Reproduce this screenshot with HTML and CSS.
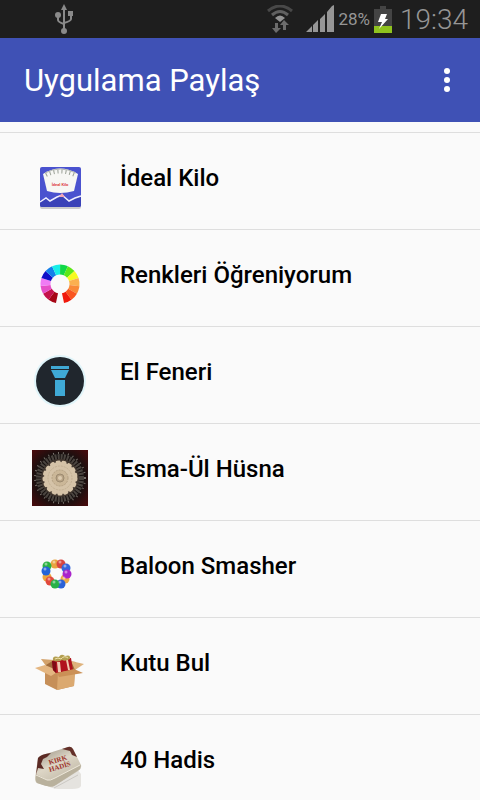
FILE: index.html
```html
<!DOCTYPE html>
<html lang="tr">
<head>
    <meta charset="UTF-8">
    <meta name="viewport" content="width=device-width, initial-scale=1.0">
    <title>Uygulama Paylaş</title>
    <link rel="stylesheet" href="styles.css">
</head>
<body>
    <div class="status-bar">
        <svg class="usb-icon" width="20" height="30" viewBox="0 0 20 30" fill="none" stroke="#8a8a8a" stroke-width="2">
            <path d="M10 4V26M4 11V16Q4 18 10 20M17 10V15Q17 17 10 19"/>
            <path d="M10 0L13 6H7Z" fill="#8a8a8a" stroke="none"/>
            <circle cx="4" cy="11" r="3" fill="#8a8a8a" stroke="none"/>
            <path d="M14 7H19V12H14Z" fill="#8a8a8a" stroke="none"/>
            <circle cx="10" cy="27" r="3" fill="#8a8a8a" stroke="none"/>
        </svg>
        <div class="status-right">
            <svg width="26" height="28" viewBox="0 0 26 28" fill="none">
                <path d="M1 6Q13 -4 25 6" stroke="#484848" stroke-width="3"/>
                <path d="M5 10Q13 3 21 10" stroke="#606060" stroke-width="3"/>
                <path d="M8 13Q13 8 18 13L13 17Z" fill="#929292"/>
                <path d="M8 18H11V23H14L9 28L5 23H8Z" fill="#6c6c6c"/>
                <path d="M16 25V20H13L17 15L22 20H19V25Z" fill="#6c6c6c"/>
            </svg>
            <svg class="signal-icon" width="28" height="28" viewBox="0 0 28 28" fill="#969696">
                <path d="M0 27L6 21V27ZM7 20L12 15V27H7ZM14 14L19 9V27H14ZM21 7L26 1L28 0V27H21Z"/>
            </svg>
            <span class="battery-level">28%</span>
            <svg class="battery-icon" width="18" height="28" viewBox="0 0 18 28">
                <path d="M6 1H12V4H18V28H0V4H6Z" fill="#444"/>
                <path d="M0 21H18V28H0Z" fill="#8fc31f"/>
                <path d="M7 9H13L11 14H14L5 24L8 17H4Z" fill="#fff"/>
            </svg>
            <span class="clock">19:34</span>
        </div>
    </div>

    <header class="app-bar">
        <h1>Uygulama Paylaş</h1>
        <button class="menu-button" type="button" aria-label="Menü">
            <svg width="6" height="24" viewBox="0 0 6 24" fill="#fff">
                <circle cx="3" cy="3" r="3"/>
                <circle cx="3" cy="12" r="3"/>
                <circle cx="3" cy="21" r="3"/>
            </svg>
        </button>
    </header>

    <ul class="app-list">
        <li class="app-item">
            <!-- bathroom scale -->
            <svg class="app-icon" viewBox="0 0 56 56">
                <rect x="8" y="9" width="41" height="41" rx="2" fill="#ccc"/>
                <rect x="8" y="8" width="41" height="40" rx="2" fill="#4a52cf"/>
                <path d="M11 15Q28 4 46 15L42 32Q28 36 15 32Z" fill="#f7f7f4"/>
                <path d="M14 16Q28 9 43 16" fill="none" stroke="#999f94" stroke-width="4" stroke-dasharray="1 3"/>
                <path d="M13 14Q28 6 44 14" fill="none" stroke="#b4b8b2" stroke-width="1"/>
                <text class="scale-label" x="28" y="27">İdeal Kilo</text>
                <path d="M8 43L14 39L18 42L25 38L30 36L37 42L43 39L49 37V46Q49 48 47 48H10Q8 48 8 46Z" fill="#3a42b8"/>
                <path d="M8 43L14 39L18 42L25 38L30 36L37 42L43 39L49 37" fill="none" stroke="#eef" stroke-width="1.5"/>
                <path d="M27 38L30 34L33 38Z" fill="#f3a5b5"/>
            </svg>
            <span class="app-name">İdeal Kilo</span>
        </li>
        <li class="app-item">
            <!-- colour wheel -->
            <svg class="app-icon" viewBox="0 0 56 56">
                <g class="wheel" transform="rotate(102 28 28)">
                    <circle cx="28" cy="28" r="14.5" pathLength="360" stroke="#a60616"/>
                    <circle cx="28" cy="28" r="14.5" pathLength="360" stroke="#c4124a" stroke-dashoffset="-24"/>
                    <circle cx="28" cy="28" r="14.5" pathLength="360" stroke="#e650c8" stroke-dashoffset="-48"/>
                    <circle cx="28" cy="28" r="14.5" pathLength="360" stroke="#f07cf5" stroke-dashoffset="-72"/>
                    <circle cx="28" cy="28" r="14.5" pathLength="360" stroke="#1010c8" stroke-dashoffset="-96"/>
                    <circle cx="28" cy="28" r="14.5" pathLength="360" stroke="#1480ea" stroke-dashoffset="-120"/>
                    <circle cx="28" cy="28" r="14.5" pathLength="360" stroke="#18eee8" stroke-dashoffset="-144"/>
                    <circle cx="28" cy="28" r="14.5" pathLength="360" stroke="#10d848" stroke-dashoffset="-168"/>
                    <circle cx="28" cy="28" r="14.5" pathLength="360" stroke="#5ce818" stroke-dashoffset="-192"/>
                    <circle cx="28" cy="28" r="14.5" pathLength="360" stroke="#f6fa20" stroke-dashoffset="-216"/>
                    <circle cx="28" cy="28" r="14.5" pathLength="360" stroke="#fbb050" stroke-dashoffset="-240"/>
                    <circle cx="28" cy="28" r="14.5" pathLength="360" stroke="#f98a38" stroke-dashoffset="-264"/>
                    <circle cx="28" cy="28" r="14.5" pathLength="360" stroke="#f95520" stroke-dashoffset="-288"/>
                    <circle cx="28" cy="28" r="14.5" pathLength="360" stroke="#f01a0c" stroke-dashoffset="-312"/>
                </g>
            </svg>
            <span class="app-name">Renkleri Öğreniyorum</span>
        </li>
        <li class="app-item">
            <!-- flashlight -->
            <svg class="app-icon" viewBox="0 0 56 56">
                <circle cx="28" cy="28" r="26" fill="#e0f5fa"/>
                <circle cx="28" cy="28" r="24" fill="#20262d"/>
                <path d="M19 13H37V16H19ZM19 17H37L33 25H23ZM23 27H33V43H23Z" fill="#3fa9d6"/>
            </svg>
            <span class="app-name">El Feneri</span>
        </li>
        <li class="app-item">
            <!-- rosette -->
            <svg class="app-icon" viewBox="0 0 56 56">
                <defs>
                    <radialGradient id="night" r="0.7">
                        <stop offset="0.6" stop-color="#16100f"/>
                        <stop offset="1" stop-color="#4a0a0c"/>
                    </radialGradient>
                </defs>
                <rect width="56" height="56" fill="url(#night)"/>
                <circle cx="28" cy="28" r="25" fill="none" stroke="#77706a" stroke-width="2" stroke-dasharray="1 4"/>
                <circle cx="28" cy="28" r="21" fill="none" stroke="#4a443f" stroke-width="6" stroke-dasharray="2 1"/>
                <circle cx="28" cy="28" r="19" fill="#41372f"/>
                <circle cx="28" cy="28" r="16" fill="#d5c3a8"/>
                <circle cx="28" cy="28" r="16" fill="none" stroke="#d5c3a8" stroke-width="3" stroke-linecap="round" stroke-dasharray="2 4"/>
                <circle cx="28" cy="28" r="12" fill="none" stroke="#c4b194" stroke-width="1" stroke-dasharray="2 1"/>
                <circle cx="28" cy="28" r="8" fill="#cbb798" stroke="#b5a184" stroke-dasharray="2 1"/>
                <circle cx="28" cy="28" r="4" fill="#baa587" stroke="#9c8a70"/>
                <circle cx="28" cy="28" r="2" fill="#dccbb0"/>
            </svg>
            <span class="app-name">Esma-Ül Hüsna</span>
        </li>
        <li class="app-item">
            <!-- ring of balloons -->
            <svg class="app-icon" viewBox="0 0 56 56">
                <circle cx="23" cy="17" r="4.5" fill="#e9a441"/>
                <circle cx="29" cy="17" r="4.5" fill="#d84540"/>
                <circle cx="15" cy="19" r="4.5" fill="#2bb340"/>
                <circle cx="34" cy="21" r="4.5" fill="#3565dc"/>
                <circle cx="33" cy="32" r="4.5" fill="#edaa45"/>
                <circle cx="35" cy="27" r="4.5" fill="#a925cb"/>
                <circle cx="15" cy="30" r="4.5" fill="#eda63c"/>
                <circle cx="14" cy="24" r="4.5" fill="#2464d8"/>
                <circle cx="18" cy="34" r="4.5" fill="#e1483b"/>
                <circle cx="29" cy="37" r="4.5" fill="#2b62d6"/>
                <circle cx="23" cy="37" r="4.5" fill="#27b148"/>
                <g fill="#fff" opacity="0.45">
                    <circle cx="22" cy="15" r="1.5"/>
                    <circle cx="28" cy="15" r="1.5"/>
                    <circle cx="14" cy="17" r="1.5"/>
                    <circle cx="33" cy="19" r="1.5"/>
                    <circle cx="34" cy="25" r="1.5"/>
                    <circle cx="32" cy="31" r="1.5"/>
                    <circle cx="13" cy="22" r="1.5"/>
                    <circle cx="17" cy="32" r="1.5"/>
                    <circle cx="22" cy="35" r="1.5"/>
                    <circle cx="28" cy="35" r="1.5"/>
                </g>
            </svg>
            <span class="app-name">Baloon Smasher</span>
        </li>
        <li class="app-item">
            <!-- gift in a box -->
            <svg class="app-icon" viewBox="0 0 56 56">
                <path d="M9 15L22 16V23L14 22Z" fill="#d3a26b"/>
                <path d="M14 21L22 16L44 18L43 28H14Z" fill="#a06c3c"/>
                <path d="M39 17L52 20L43 26Z" fill="#deb27c"/>
                <path d="M13 25L43 26L42 42L25 46L13 40Z" fill="#c68f58"/>
                <path d="M26 28L43 26L42 42L25 46Z" fill="#dba970"/>
                <path d="M13 21L27 27L19 32L3 24Z" fill="#e4b681"/>
                <path d="M20 17L28 15L39 14L41 26L24 29L21 26Z" fill="#b1121e"/>
                <path d="M20 17L24 18V29L21 26Z" fill="#7e0c16"/>
                <path d="M25 18H28L29 28H26ZM34 16H36L38 26H36Z" fill="#f0c9b0"/>
                <path d="M21 16Q20 11 27 13Q29 9 33 12Q39 10 38 15Q33 18 30 16Q25 19 21 16Z" fill="#b39f52"/>
                <path d="M23 15Q26 13 29 15Q32 11 36 14" fill="none" stroke="#efe1a8" stroke-width="1"/>
                <path d="M25 29L42 25L51 29L27 33Z" fill="#cb9056"/>
            </svg>
            <span class="app-name">Kutu Bul</span>
        </li>
        <li class="app-item">
            <!-- card box -->
            <svg class="app-icon" viewBox="0 0 56 56">
                <defs>
                    <linearGradient id="card" x2="0.6" y2="1">
                        <stop offset="0" stop-color="#8d8577"/>
                        <stop offset="0.5" stop-color="#ddd6c6"/>
                        <stop offset="1" stop-color="#bdb5a3"/>
                    </linearGradient>
                </defs>
                <path d="M13 43L44 27L49 33V45Q48 48 40 48H27Q19 48 13 43Z" fill="#e5e3df"/>
                <path d="M22 47L46 34" stroke="#cbc8c3" stroke-width="1"/>
                <path d="M6 17Q8 14 14 13L36 6Q39 5 41 8L49 24Q50 27 46 30L24 44Q20 47 15 45L5 42Q3 41 3 37Z" fill="url(#card)"/>
                <path d="M4 33L15 39Q18 40 23 37L49 24L48 28L22 45Q18 47 5 42Q3 40 4 33Z" fill="#b9b19d"/>
                <path d="M4 34L15 39Q18 40 23 37L48 24" fill="none" stroke="#ece6d8" stroke-width="1"/>
                <path d="M6 17Q9 13 19 12L15 16L11 18L9 23L12 28L6 27L4 34Z" fill="#5b2a24"/>
                <path d="M30 8L36 6Q39 5 41 8L45 16L40 14L38 10Z" fill="#643029"/>
                <g transform="rotate(-17 27 23)">
                    <text class="card-label" x="27" y="21">KIRK</text>
                    <text class="card-label" x="27" y="28">HADİS</text>
                </g>
            </svg>
            <span class="app-name">40 Hadis</span>
        </li>
    </ul>
</body>
</html>
```
FILE: styles.css
```css
* {
    margin: 0;
    padding: 0;
    box-sizing: border-box;
}

body {
    font-family: Roboto, "Noto Sans", sans-serif;
    background: #fafafa;
    color: #000;
    height: 100vh;
    display: flex;
    flex-direction: column;
    overflow: hidden;
}

.status-bar {
    display: flex;
    align-items: center;
    justify-content: space-between;
    flex-shrink: 0;
    height: 38px;
    padding: 0 12px 0 54px;
    background: #1e1e1e;
    color: #969696;
}

.status-right {
    display: flex;
    align-items: center;
}

.signal-icon {
    margin-left: 13px;
}

.battery-level {
    margin: 0 4px;
    font-size: 17px;
    font-weight: 400;
}

.clock {
    margin-left: 8px;
    font-size: 28px;
    font-weight: 300;
}

.app-bar {
    display: flex;
    align-items: center;
    justify-content: space-between;
    flex-shrink: 0;
    height: 84px;
    padding: 0 24px;
    background: #3f51b5;
    color: #fff;
}

.app-bar h1 {
    font-size: 31px;
    font-weight: 400;
}

.menu-button {
    display: flex;
    padding: 6px;
    border: none;
    background: none;
    cursor: pointer;
}

.app-list {
    flex: 1;
    min-height: 0;
    padding-top: 10px;
    list-style: none;
    overflow: hidden;
}

.app-item {
    display: flex;
    align-items: flex-start;
    gap: 32px;
    height: 97px;
    padding: 26px 32px 0;
    border-top: 1px solid #dedede;
}

.app-icon {
    flex-shrink: 0;
    width: 56px;
    height: 56px;
}

.app-name {
    font-size: 24px;
    font-weight: 500;
    line-height: 38px;
}

.wheel circle {
    fill: none;
    stroke-width: 10;
    stroke-dasharray: 24 336;
}

.scale-label {
    font-size: 4px;
    font-weight: 700;
    fill: #d44;
    text-anchor: middle;
}

.card-label {
    font-family: "Liberation Serif", serif;
    font-size: 7px;
    font-weight: 700;
    fill: #9c3028;
    text-anchor: middle;
}
```
